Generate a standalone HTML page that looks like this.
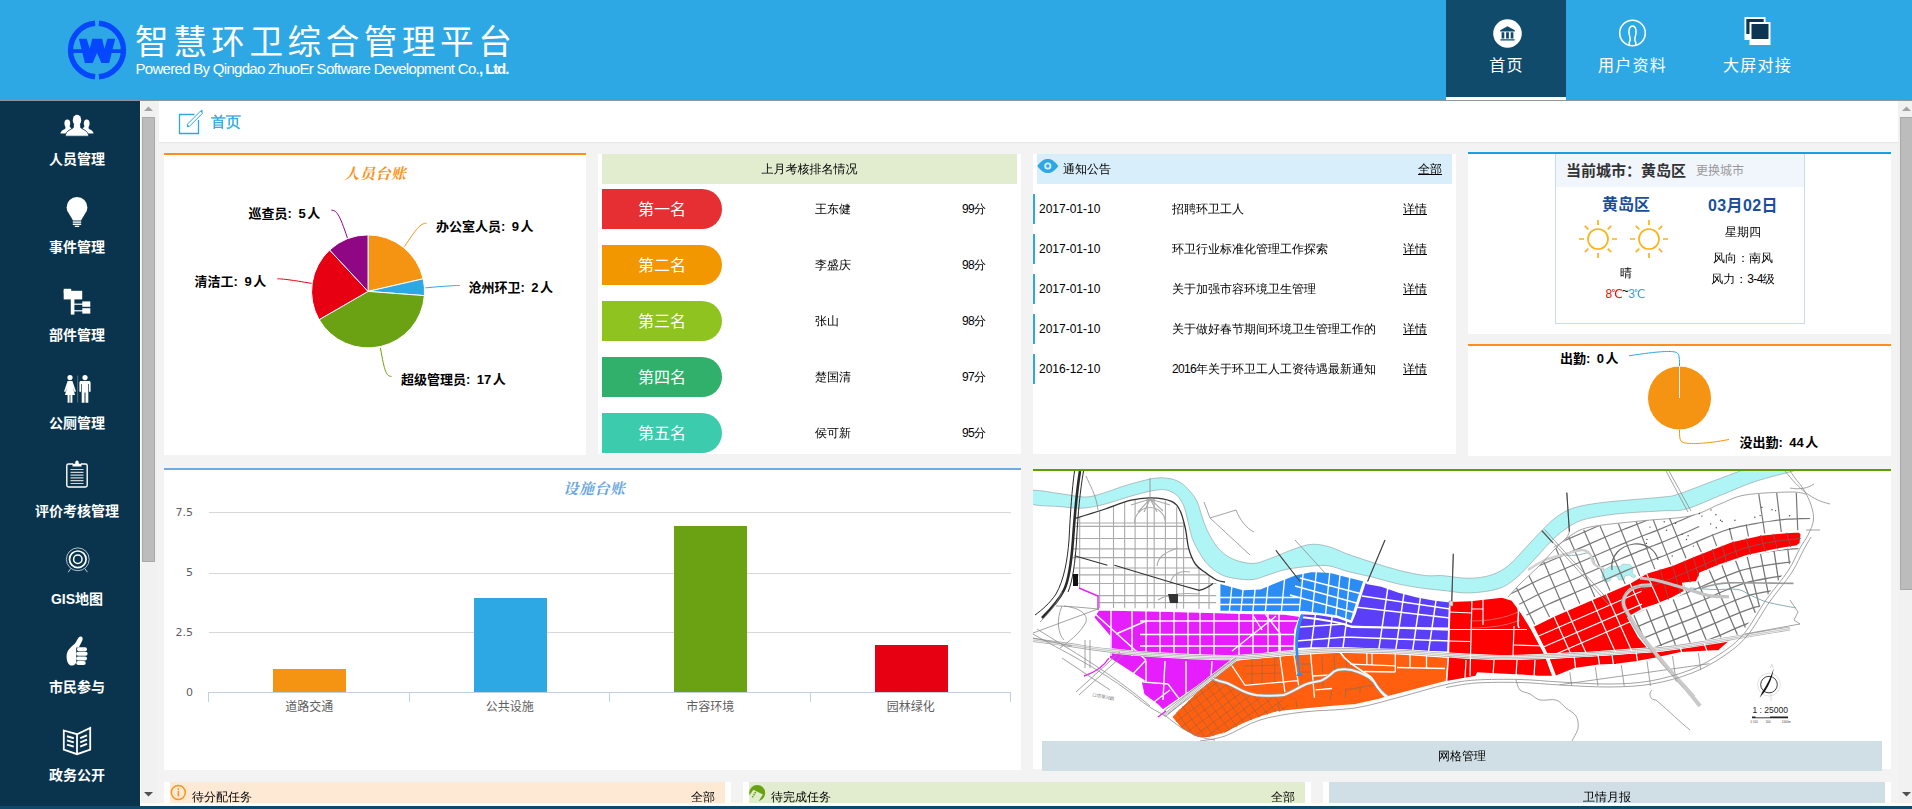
<!DOCTYPE html>
<html lang="zh-CN">
<head>
<meta charset="utf-8">
<title>智慧环卫综合管理平台</title>
<style>
*{box-sizing:border-box;margin:0;padding:0}
html,body{width:1912px;height:809px;overflow:hidden;background:#fff}
body{position:relative;font-family:"Liberation Sans","Noto Sans CJK SC",sans-serif;font-size:12px;color:#000}
.abs{position:absolute}
.song{font-family:"Liberation Sans","WenQuanYi Zen Hei","Noto Sans CJK SC",sans-serif}
.kai{font-family:"Liberation Serif","Noto Serif CJK SC",serif}
/* header */
#hd{position:absolute;left:0;top:0;width:1912px;height:100px;background:#2ea8e5}
#hdline{position:absolute;left:0;top:100px;width:1912px;height:1px;background:#8f9596}
#title{position:absolute;left:135px;top:20.5px;font-size:33.6px;line-height:44px;color:#fff;font-weight:400;letter-spacing:4.55px;white-space:nowrap}
#sub{position:absolute;left:135.5px;top:60px;font-size:15px;line-height:18px;color:#fff;white-space:nowrap;letter-spacing:-0.7px}
.tab{position:absolute;top:0;height:100px;width:120px;text-align:center;color:#fff;font-size:16px;letter-spacing:1.3px}
.tab span{position:absolute;left:0;width:100%;top:54px;line-height:24px;text-indent:1px}
.tab svg{position:absolute}
#tab1{left:1446px;background:#114b6c;border-bottom:3px solid #fff}
/* sidebar */
#sb{position:absolute;left:0;top:101px;width:140px;height:708px;background:#0a344e}
.mi{position:absolute;left:0;width:154px;text-align:center;color:#fff;font-weight:bold;font-size:14px;line-height:20px;white-space:nowrap}
.ic{position:absolute}
/* scrollbars */
.trk{position:absolute;background:#f1f1f1}
.thumb{position:absolute;background:#bcbcbc;border:1px solid #a9a9a9}
/* content */
#ct{position:absolute;left:157px;top:101px;width:1741px;height:702px;background:#f3f3f3}
#crumb{position:absolute;left:159px;top:101px;width:1739px;height:41px;background:#fff;box-shadow:0 1px 1px #e6e6e6}
.pn{position:absolute;background:#fff}
.hdr{position:absolute;height:29px;line-height:30px;font-size:12px}

.t12{position:absolute;font-size:12px;line-height:16px;white-space:nowrap}
.bdg{position:absolute;left:602px;width:120px;height:40px;border-radius:0 20px 20px 0;color:#fff;font-size:16px;line-height:42px;text-align:center;font-family:"Liberation Sans","Noto Sans CJK SC",sans-serif}
.nbar{position:absolute;left:1033px;width:2px;height:30px;background:#2ea7e5}
.u{text-decoration:underline}
.n{letter-spacing:-.65px}
#foot{position:absolute;left:0;top:806px;width:1912px;height:3px;background:#0f4868}
</style>
</head>
<body>
<div id="hd"></div>
<div id="hdline"></div>
<svg class="abs" style="left:64px;top:17px" width="66" height="66" viewBox="0 0 66 66">
<g fill="none" stroke="#0546ff">
<path d="M31.100 6.200A26.900 26.900 0 0 0 31.100 59.800" stroke-width="5.400"/>
<path d="M34.900 6.200A26.900 26.900 0 0 1 34.900 59.800" stroke-width="5.400"/>
<path d="M8 34.100H58" stroke-width="3.900"/>
</g>
<path fill="#0546ff" d="M14.900 21.800H22.700L25.700 31.700L28.300 21.800H38.200L40.400 31.700L43.400 21.800H51.200L45.200 46H37.400L33 36L28.700 46H20.900Z"/>
</svg>
<div id="title">智慧环卫综合管理平台</div>
<div id="sub">Powered By Qingdao ZhuoEr Software Development Co.<b style="letter-spacing:-1.1px">, Ltd.</b></div>
<div class="tab" id="tab1"><svg style="left:46.5px;top:18.5px" width="29" height="29" viewBox="0 0 29 29"><circle cx="14.5" cy="14.5" r="14.3" fill="#fff"/><path fill="#114b6c" d="M14.5 7.2L21.8 11.3V12.4H7.2V11.3ZM8.6 13.2H11.3V19.4H8.6ZM13.1 13.2H15.9V19.4H13.1ZM17.7 13.2H20.4V19.4H17.7ZM7.4 20.2H21.6V21.6H7.4Z"/></svg><span>首页</span></div>
<div class="tab" style="left:1572px"><svg style="left:46px;top:19px" width="29" height="29" viewBox="0 0 29 29"><circle cx="14.5" cy="14" r="12.8" fill="none" stroke="#fff" stroke-width="1.6"/><path fill="none" stroke="#fff" stroke-width="1.5" d="M11.2 26V23.5C13.6 20.5 11.3 17.5 11 14C10.6 9.8 12 7 14.5 7C17 7 18.4 9.8 18 14C17.7 17.5 15.4 20.5 17.8 23.5V26"/></svg><span>用户资料</span></div>
<div class="tab" style="left:1697px"><svg style="left:47px;top:16px" width="28" height="30" viewBox="0 0 28 30"><rect x="0.5" y="1" width="21" height="23" fill="#fff"/><rect x="2.3" y="3" width="17.4" height="15" fill="#0b3550"/><rect x="5.5" y="6" width="21" height="23" fill="#fff"/><rect x="7.5" y="8" width="17" height="15" fill="#0b3550"/></svg><span>大屏对接</span></div>
<div id="sb"></div>
<div class="mi" style="top:149px">人员管理</div>
<div class="mi" style="top:237px">事件管理</div>
<div class="mi" style="top:325px">部件管理</div>
<div class="mi" style="top:413px">公厕管理</div>
<div class="mi" style="top:501px">评价考核管理</div>
<div class="mi" style="top:589px">GIS地图</div>
<div class="mi" style="top:677px">市民参与</div>
<div class="mi" style="top:765px">政务公开</div>
<svg class="ic" style="left:60px;top:114px" width="34" height="23" viewBox="0 0 34 23" fill="#fff">
<ellipse cx="7.3" cy="9.3" rx="2.9" ry="3.9"/><ellipse cx="26.7" cy="9.3" rx="2.9" ry="3.9"/>
<path d="M5.4 12V14.6C3.8 16 1.2 16.2.4 19.6H6.5C7.5 17 9.5 16 11.5 14.8L9.3 12Z"/>
<path d="M28.6 12V14.6C30.2 16 32.8 16.2 33.6 19.6H27.5C26.500 17 24.5 16 22.5 14.800L24.700 12Z"/>
<ellipse cx="17" cy="6.300" rx="4.300" ry="5.800" stroke="#0a344e" stroke-width="1"/>
<path d="M13.400 10V13.500C11.500 15.800 6.200 15.800 5.200 22.200H28.800C27.800 15.800 22.500 15.800 20.600 13.500V10Z" stroke="#0a344e" stroke-width=".8"/>
<ellipse cx="17" cy="6.300" rx="4.100" ry="5.600"/>
</svg>
<svg class="ic" style="left:66px;top:196px" width="22" height="32" viewBox="0 0 22 32" fill="#fff">
<circle cx="11" cy="11.400" r="10.400"/><path d="M3.500 18.500L7 24.400H15L18.500 18.500Z"/>
<rect x="6.800" y="25.400" width="8.400" height="1.400"/><rect x="6.800" y="27.600" width="8.400" height="1.400"/><rect x="8.800" y="29.700" width="4.400" height="1.300"/>
</svg>
<svg class="ic" style="left:63px;top:288px" width="28" height="27" viewBox="0 0 28 27" fill="#fff">
<rect x=".7" y=".8" width="7.500" height="4"/><rect x=".7" y="2.800" width="18.500" height="8.600"/>
<rect x="7.800" y="11" width="3.600" height="15.600"/>
<rect x="11" y="15.600" width="9" height="1.200"/><rect x="11" y="22.200" width="9" height="1.200"/>
<rect x="19.300" y="13.400" width="8" height="5.400"/><rect x="19.300" y="20.200" width="8" height="5.400"/>
</svg>
<svg class="ic" style="left:63px;top:374px" width="28" height="30" viewBox="0 0 28 30" fill="#fff">
<circle cx="7" cy="3.600" r="2.600"/>
<path d="M4.600 7H9.400L13 17.500L11.600 18L9.800 13.200L12 21H9.400V28.700H7.400V21H6.600V28.700H4.600V21H2L4.200 13.200L2.400 18L1 17.500Z"/>
<rect x="14.300" y="1.500" width=".8" height="27" fill="#5f7b8c"/>
<circle cx="22" cy="3.600" r="2.600"/>
<path d="M18 7H26C27 7 27.600 7.600 27.600 8.600V17.800H26V10H25.300V28.700H22.500V18.500H21.500V28.700H18.700V10H18V17.800H16.400V8.600C16.400 7.600 17 7 18 7Z"/>
</svg>
<svg class="ic" style="left:65px;top:459px" width="24" height="30" viewBox="0 0 24 30" fill="none" stroke="#fff">
<path d="M8 5H3.500C2.400 5 1.800 5.600 1.800 6.700V26.300C1.800 27.400 2.400 28 3.500 28H20.500C21.600 28 22.200 27.400 22.200 26.300V6.700C22.200 5.600 21.600 5 20.500 5H16" stroke-width="1.400"/>
<path d="M7.500 7.500V4.800H10.200C10.200 2.800 10.800 1.600 12 1.600C13.200 1.600 13.800 2.800 13.800 4.800H16.500V7.500Z" fill="#fff" stroke="none"/>
<path d="M5.500 10.500H18.500M5.500 13.300H18.500M5.500 16.100H18.500M5.500 18.900H18.500M5.500 21.700H18.500M5.500 24.500H18.500" stroke-width="1.200" stroke="#c9d3da"/>
</svg>
<svg class="ic" style="left:65px;top:546px" width="26" height="27" viewBox="0 0 26 27" fill="none" stroke="#fff">
<circle cx="12.800" cy="13.300" r="11.400" stroke-width=".9" stroke="#c3ced5"/>
<circle cx="12.800" cy="13.300" r="8.300" stroke-width="1.700"/>
<circle cx="12.800" cy="13.300" r="4.200" stroke-width="1.500"/>
<path d="M5.800 22.500L3.200 26.200M19.800 22.500L22.400 26.200" stroke-width="1" stroke="#c3ced5"/>
</svg>
<svg class="ic" style="left:65px;top:635px" width="24" height="32" viewBox="0 0 24 32" fill="#fff">
<path d="M15.600 1.500C17.600 1.500 18.200 3.500 17.300 5.500L13.800 12.500H11.200V26.500C11.200 28.500 9.500 30.600 7 30.600C3.500 30.600 1.600 26.500 1.600 21.500C1.600 15.500 5.500 12.500 9.500 9C12 6.500 13 1.500 15.600 1.500Z"/>
<rect x="12" y="12.200" width="10" height="4" rx="2"/><rect x="11.200" y="16.800" width="11.400" height="4" rx="2"/><rect x="11.200" y="21.400" width="10.800" height="4" rx="2"/><rect x="11.200" y="26" width="9.500" height="4" rx="2"/>
</svg>
<svg class="ic" style="left:62px;top:726px" width="30" height="30" viewBox="0 0 30 30" fill="none" stroke="#fff">
<path d="M1.800 4.500L15 8.200L28.200 2V23.500L15 28.200L1.800 23.500Z" stroke-width="1.800" stroke-linejoin="miter"/>
<path d="M15 8.200V28.200" stroke-width="1.800"/>
<path d="M5 10.200L11.800 12.200M5 14.400L11.800 16.400M5 18.600L11.800 20.600M18.200 12.200L25 9.400M18.200 16.400L25 13.600M18.200 20.600L25 17.800" stroke-width="2"/>
</svg>

<div id="ct"></div>
<div id="crumb"></div>
<div class="trk" style="left:141px;top:101px;width:16px;height:702px"></div>
<div class="abs" style="left:140px;top:101px;width:1px;height:702px;background:#fff"></div>
<div class="thumb" style="left:142px;top:117px;width:13px;height:445px"></div>
<svg class="abs" style="left:144px;top:106px" width="9" height="6" viewBox="0 0 9 6"><path d="M0 5L4.500.5L9 5Z" fill="#a3a3a3"/></svg>
<svg class="abs" style="left:144px;top:791px" width="9" height="6" viewBox="0 0 9 6"><path d="M0 1L4.500 5.500L9 1Z" fill="#505050"/></svg>
<div class="trk" style="left:1898px;top:101px;width:14px;height:702px"></div>
<div class="thumb" style="left:1900px;top:117px;width:13px;height:473px"></div>
<svg class="abs" style="left:1902px;top:106px" width="9" height="6" viewBox="0 0 9 6"><path d="M0 5L4.500.5L9 5Z" fill="#a3a3a3"/></svg>
<svg class="abs" style="left:1902px;top:791px" width="9" height="6" viewBox="0 0 9 6"><path d="M0 1L4.500 5.500L9 1Z" fill="#505050"/></svg>
<div class="abs" style="left:140px;top:803px;width:1772px;height:3px;background:#fff"></div>


<svg class="abs" style="left:177px;top:107px" width="30" height="30" viewBox="0 0 30 30" fill="none" stroke="#2ea7e5">
<path d="M17.500 7.500H2.500V26.500H21.500V13" stroke-width="1.300"/>
<path d="M11.200 19.800L10.300 17.300L23.600 4L25.700 6.100L12.400 19.400Z" stroke-width="1" fill="#fff"/>
<path d="M10.300 17.300L9.800 20.200L12.400 19.400Z" fill="#2ea7e5" stroke="none"/>
<path d="M24 3.400L25.300 4.700" stroke-width="2"/>
</svg>
<div class="abs song" style="left:211px;top:111px;font-size:15px;line-height:22px;color:#2ea7e5;-webkit-text-stroke:.35px #2ea7e5">首页</div>

<!-- P1 pie -->
<div class="pn" style="left:164px;top:153px;width:422px;height:302px;border-top:2px solid #ff8e1c"></div>
<svg class="abs" style="left:164px;top:155px" width="422" height="300" viewBox="164 155 422 300">
<path d="M368.05 291.40L368.05 234.90A56.50 56.50 0 0 1 423.13 278.83Z" fill="#f59312" stroke="#fff" stroke-width="1" stroke-linejoin="round"/>
<path d="M368.05 291.40L423.13 278.83A56.50 56.50 0 0 1 424.39 295.62Z" fill="#2ea7e5" stroke="#fff" stroke-width="1" stroke-linejoin="round"/>
<path d="M368.05 291.40L424.39 295.62A56.50 56.50 0 0 1 319.12 319.65Z" fill="#6ba213" stroke="#fff" stroke-width="1" stroke-linejoin="round"/>
<path d="M368.05 291.40L319.12 319.65A56.50 56.50 0 0 1 329.62 249.98Z" fill="#e60012" stroke="#fff" stroke-width="1" stroke-linejoin="round"/>
<path d="M368.05 291.40L329.62 249.98A56.50 56.50 0 0 1 368.05 234.90Z" fill="#8f0783" stroke="#fff" stroke-width="1" stroke-linejoin="round"/>
<path d="M331.3 210.2C336.5 210.2 339.5 214 347.4 238" fill="none" stroke="#8f0783" stroke-width="1"/>
<path d="M426.6 223.2C420.5 223.2 416 229 404.5 246.6" fill="none" stroke="#f59312" stroke-width="1"/>
<path d="M459.8 285.5C454.8 285.5 445 286 425.3 287.9" fill="none" stroke="#2ea7e5" stroke-width="1"/>
<path d="M277.3 278.8C282.3 278.8 292 280 311.6 283.4" fill="none" stroke="#e60012" stroke-width="1"/>
<path d="M391.5 376.4C386.5 376.4 384.5 372 380.4 347.8" fill="none" stroke="#6ba213" stroke-width="1"/>
<text x="248.6" y="218.1" font-size="13" font-weight="bold" fill="#000" font-family="Liberation Sans,Noto Sans CJK SC,sans-serif">巡查员:<tspan dx="6.5">5</tspan><tspan dx="1.5">人</tspan></text>
<text x="436.0" y="231.0" font-size="13" font-weight="bold" fill="#000" font-family="Liberation Sans,Noto Sans CJK SC,sans-serif">办公室人员:<tspan dx="6.5">9</tspan><tspan dx="1.5">人</tspan></text>
<text x="468.5" y="292.1" font-size="13" font-weight="bold" fill="#000" font-family="Liberation Sans,Noto Sans CJK SC,sans-serif">沧州环卫:<tspan dx="6.5">2</tspan><tspan dx="1.5">人</tspan></text>
<text x="194.6" y="286.1" font-size="13" font-weight="bold" fill="#000" font-family="Liberation Sans,Noto Sans CJK SC,sans-serif">清洁工:<tspan dx="6.5">9</tspan><tspan dx="1.5">人</tspan></text>
<text x="401.0" y="383.7" font-size="13" font-weight="bold" fill="#000" font-family="Liberation Sans,Noto Sans CJK SC,sans-serif">超级管理员:<tspan dx="6.5">17</tspan><tspan dx="1.5">人</tspan></text>
<text x="375.5" y="179" text-anchor="middle" letter-spacing=".6" font-size="15" font-weight="bold" font-style="italic" fill="#f7931e" font-family="Liberation Serif,Noto Serif CJK SC,serif">人员台账</text>
</svg>
<!-- P2 rank -->
<div class="pn" style="left:598px;top:154px;width:423px;height:300px"></div>
<div class="hdr song" style="left:602px;top:154px;width:415px;height:30px;background:#e2edd0;text-align:center;line-height:31px">上月考核排名情况</div>
<div class="bdg" style="top:189px;background:#e62f33">第一名</div><div class="t12 song" style="left:815px;top:201px">王东健</div><div class="t12 song n" style="left:962px;top:201px">99分</div>
<div class="bdg" style="top:245px;background:#f39700">第二名</div><div class="t12 song" style="left:815px;top:257px">李盛庆</div><div class="t12 song n" style="left:962px;top:257px">98分</div>
<div class="bdg" style="top:301px;background:#8fc31f">第三名</div><div class="t12 song" style="left:815px;top:313px">张山</div><div class="t12 song n" style="left:962px;top:313px">98分</div>
<div class="bdg" style="top:357px;background:#31b06b">第四名</div><div class="t12 song" style="left:815px;top:369px">楚国清</div><div class="t12 song n" style="left:962px;top:369px">97分</div>
<div class="bdg" style="top:413px;background:#3dcbad">第五名</div><div class="t12 song" style="left:815px;top:425px">侯可新</div><div class="t12 song n" style="left:962px;top:425px">95分</div>

<!-- P3 notice -->
<div class="pn" style="left:1033px;top:154px;width:423px;height:300px"></div>
<div class="hdr" style="left:1037px;top:154px;width:415px;height:30px;background:#d8eefa"></div>
<svg class="abs" style="left:1037px;top:158px" width="22" height="16" viewBox="0 0 22 16"><path d="M.3 8C4 2.600 7.500 1 10.800 1C14.100 1 17.600 2.600 21.300 8C17.600 13.400 14.100 15 10.800 15C7.500 15 4 13.400.3 8Z" fill="#2ea7e5"/><circle cx="10.800" cy="8" r="3.600" fill="#d8eefa"/><circle cx="10.800" cy="8" r="1.700" fill="#2ea7e5"/></svg>
<div class="t12 song" style="left:1063px;top:161px">通知公告</div>
<div class="t12 song u" style="left:1418px;top:161px">全部</div>
<div class="nbar" style="top:194px"></div><div class="t12 song" style="left:1039px;top:201px">2017-01-10</div><div class="t12 song" style="left:1172px;top:201px">招聘环卫工人</div><div class="t12 song u" style="left:1403px;top:201px">详情</div>
<div class="nbar" style="top:234px"></div><div class="t12 song" style="left:1039px;top:241px">2017-01-10</div><div class="t12 song" style="left:1172px;top:241px">环卫行业标准化管理工作探索</div><div class="t12 song u" style="left:1403px;top:241px">详情</div>
<div class="nbar" style="top:274px"></div><div class="t12 song" style="left:1039px;top:281px">2017-01-10</div><div class="t12 song" style="left:1172px;top:281px">关于加强市容环境卫生管理</div><div class="t12 song u" style="left:1403px;top:281px">详情</div>
<div class="nbar" style="top:314px"></div><div class="t12 song" style="left:1039px;top:321px">2017-01-10</div><div class="t12 song" style="left:1172px;top:321px">关于做好春节期间环境卫生管理工作的</div><div class="t12 song u" style="left:1403px;top:321px">详情</div>
<div class="nbar" style="top:354px"></div><div class="t12 song" style="left:1039px;top:361px">2016-12-10</div><div class="t12 song" style="left:1172px;top:361px"><span class="n">2016</span>年关于环卫工人工资待遇最新通知</div><div class="t12 song u" style="left:1403px;top:361px">详情</div>

<!-- P4 weather -->
<div class="pn" style="left:1468px;top:152px;width:423px;height:182px;border-top:2px solid #18a0e0"></div>
<div class="abs" style="left:1555px;top:154px;width:250px;height:170px;border:1px solid #c7dbee;border-top:0;background:#fff"></div>
<div class="abs" style="left:1556px;top:154px;width:248px;height:33px;background:#f1f6fc"></div>
<div class="abs" style="left:1566px;top:161px;font-size:15px;line-height:20px;font-weight:bold;color:#333;white-space:nowrap">当前城市：黄岛区</div>
<div class="t12" style="left:1696px;top:163px;color:#999">更换城市</div>
<div class="abs" style="left:1586px;top:194px;width:80px;text-align:center;font-size:16px;line-height:22px;font-weight:bold;color:#1b4f9d">黄岛区</div>
<div class="abs" style="left:1693px;top:195px;width:100px;text-align:center;font-size:16px;line-height:22px;font-weight:bold;color:#1b4f9d;white-space:nowrap;letter-spacing:.4px">03月02日</div>
<svg class="abs" style="left:1575px;top:217.700px" width="100" height="42" viewBox="-23 -21 100 42"><g fill="none" stroke="#fcb316" stroke-width="1.700"><circle cx="0" cy="0" r="10"/><path d="M0 -14V-19M0 14V19M-14 0H-19M14 0H19M-9.700 -9.700L-13.200 -13.200M9.700 -9.700L13.200 -13.200M-9.700 9.700L-13.200 13.200M9.700 9.700L13.200 13.200"/></g><g transform="translate(51 0)"><g fill="none" stroke="#fcb316" stroke-width="1.700"><circle cx="0" cy="0" r="10"/><path d="M0 -14V-19M0 14V19M-14 0H-19M14 0H19M-9.700 -9.700L-13.200 -13.200M9.700 -9.700L13.200 -13.200M-9.700 9.700L-13.200 13.200M9.700 9.700L13.200 13.200"/></g></g></svg>
<div class="t12 song" style="left:1693px;top:224px;width:100px;text-align:center">星期四</div>
<div class="t12 song" style="left:1693px;top:250px;width:100px;text-align:center">风向：南风</div>
<div class="t12 song" style="left:1693px;top:271px;width:100px;text-align:center">风力：<span class="n">3-4</span>级</div>
<div class="t12 song" style="left:1586px;top:265px;width:80px;text-align:center">晴</div>
<div class="t12 song n" style="left:1585px;top:286px;width:80px;text-align:center"><span style="color:#f00">8℃</span><span style="position:relative;top:-3px">~</span><span style="color:#4899c8">3℃</span></div>

<div class="pn" style="left:1468px;top:344px;width:423px;height:112px;border-top:2px solid #ff8e1c"></div>
<svg class="abs" style="left:1468px;top:346px" width="423" height="110" viewBox="1468 346 423 110">
<circle cx="1679.500" cy="398" r="32" fill="#f59312" stroke="#fff" stroke-width="1"/>
<path d="M1679.500 398V366.400" stroke="#fff" stroke-width="1"/>
<path d="M1629 355.800C1660 351 1670 351 1675 352C1679 353 1679.500 355 1679.500 366" fill="none" stroke="#2ea7e5" stroke-width="1"/>
<path d="M1729 439.500C1705 444 1692 444 1685 443C1680 442 1679.500 440 1679.500 430" fill="none" stroke="#f59312" stroke-width="1"/>
<text x="1560" y="363.200" font-size="13" font-weight="bold" font-family="Liberation Sans,Noto Sans CJK SC,sans-serif">出勤:<tspan dx="6.500">0</tspan><tspan dx="1.500">人</tspan></text>
<text x="1739.500" y="447" font-size="13" font-weight="bold" font-family="Liberation Sans,Noto Sans CJK SC,sans-serif">没出勤:<tspan dx="6.500">44</tspan><tspan dx="1.500">人</tspan></text>
</svg>
<!-- row2 -->
<div class="pn" style="left:164px;top:468px;width:857px;height:302px;border-top:2px solid #6aabe8"></div>
<svg class="abs" style="left:164px;top:470px" width="857" height="300" viewBox="164 470 857 300" font-family="Liberation Sans,Noto Sans CJK SC,sans-serif">
<path d="M209 512.5H1011" stroke="#d8d8d8" stroke-width="1"/>
<path d="M209 573.5H1011" stroke="#d8d8d8" stroke-width="1"/>
<path d="M209 632.5H1011" stroke="#d8d8d8" stroke-width="1"/>
<path d="M209 692.500H1011" stroke="#c0d0e0" stroke-width="1"/>
<path d="M208.5 692V702" stroke="#c0d0e0" stroke-width="1"/>
<path d="M409.5 692V702" stroke="#c0d0e0" stroke-width="1"/>
<path d="M609.5 692V702" stroke="#c0d0e0" stroke-width="1"/>
<path d="M810.5 692V702" stroke="#c0d0e0" stroke-width="1"/>
<path d="M1010.5 692V702" stroke="#c0d0e0" stroke-width="1"/>
<rect x="273.0" y="669.0" width="73" height="23.0" fill="#f59312"/>
<text x="309.2" y="711.300" text-anchor="middle" font-size="12" fill="#606060">道路交通</text>
<rect x="474.0" y="598.0" width="73" height="94.0" fill="#2ea7e5"/>
<text x="509.8" y="711.300" text-anchor="middle" font-size="12" fill="#606060">公共设施</text>
<rect x="674.0" y="526.0" width="73" height="166.0" fill="#6ba213"/>
<text x="710.2" y="711.300" text-anchor="middle" font-size="12" fill="#606060">市容环境</text>
<rect x="875.0" y="645.0" width="73" height="47.0" fill="#e60012"/>
<text x="910.8" y="711.300" text-anchor="middle" font-size="12" fill="#606060">园林绿化</text>
<text x="193" y="515.5" text-anchor="end" font-size="11" fill="#606060" font-family="DejaVu Sans,Liberation Sans,sans-serif">7.5</text>
<text x="193" y="575.5" text-anchor="end" font-size="11" fill="#606060" font-family="DejaVu Sans,Liberation Sans,sans-serif">5</text>
<text x="193" y="635.5" text-anchor="end" font-size="11" fill="#606060" font-family="DejaVu Sans,Liberation Sans,sans-serif">2.5</text>
<text x="193" y="695.5" text-anchor="end" font-size="11" fill="#606060" font-family="DejaVu Sans,Liberation Sans,sans-serif">0</text>
<text x="594.500" y="493.700" text-anchor="middle" letter-spacing=".6" font-size="15" font-weight="bold" font-style="italic" fill="#69a7de" font-family="Liberation Serif,Noto Serif CJK SC,serif">设施台账</text>
</svg>
<div class="pn" style="left:1033px;top:469px;width:858px;height:300px;border-top:2px solid #5f9e00"></div>
<!--MAPSTART--><svg class="abs" style="left:1033px;top:471px" width="858" height="270" viewBox="1033 471 858 270">
<defs>
<clipPath id="cB"><polygon points="1219.5,583.0 1243.0,589.3 1260.3,588.5 1277.6,581.5 1294.9,574.6 1312.2,571.2 1329.6,572.0 1346.9,576.4 1364.2,580.7 1353.8,612.7 1351.2,621.4 1336.5,616.2 1317.4,613.6 1303.6,611.8 1243.0,611.8 1219.5,611.5"/></clipPath>
<clipPath id="cP"><polygon points="1367.6,583.3 1381.5,585.9 1398.8,591.9 1416.1,596.3 1433.4,599.7 1449.9,601.5 1448.1,652.5 1398.8,650.8 1346.9,648.2 1312.2,648.2 1296.7,649.0 1294.9,636.9 1298.4,621.4 1301.9,614.4 1286.3,612.7 1319.2,614.4 1336.5,617.0 1351.2,622.2 1354.8,613.6 1365.2,581.5"/></clipPath>
<clipPath id="cM"><polygon points="1098.8,609.7 1093.6,617.4 1110.0,636.5 1109.2,658.1 1143.8,680.6 1141.2,682.4 1143.8,694.5 1157.6,704.9 1162.8,710.0 1185.3,694.5 1211.3,677.2 1232.1,661.6 1240.0,656.0 1294.1,651.0 1294.9,630.0 1300.1,616.2 1284.5,614.0 1243.0,613.3 1219.0,612.5 1160.0,611.0"/></clipPath>
<clipPath id="cO"><polygon points="1233.8,660.7 1243.0,659.0 1294.9,654.6 1339.9,652.0 1398.8,653.8 1449.0,657.2 1446.4,681.5 1390.1,696.2 1378.0,699.6 1355.5,704.8 1333.0,706.5 1303.6,709.1 1277.6,711.7 1260.3,716.9 1243.0,723.9 1225.0,733.0 1210.0,737.5 1197.4,737.7 1181.9,729.1 1171.5,717.0 1195.7,692.7 1211.3,679.8"/></clipPath>
<clipPath id="cRw"><polygon points="1449.9,601.3 1470.7,600.4 1501.9,597.0 1512.0,600.0 1515.7,604.8 1521.8,613.4 1527.8,622.9 1531.0,628.0 1544.9,654.0 1551.8,673.0 1553.5,676.6 1536.5,676.2 1494.9,674.0 1477.6,673.0 1475.9,676.6 1446.5,681.8 1448.2,659.0"/></clipPath>
<clipPath id="cRm"><polygon points="1533.0,626.4 1553.8,616.0 1591.9,599.6 1629.9,583.1 1646.5,573.0 1672.4,565.3 1693.2,556.6 1712.2,548.9 1733.0,541.1 1760.6,535.0 1786.6,532.4 1799.0,531.6 1801.3,534.0 1800.3,543.4 1797.0,546.0 1774.5,549.7 1746.8,555.8 1719.1,565.3 1700.1,573.1 1696.6,581.7 1682.8,583.5 1684.5,591.5 1672.3,597.9 1656.7,604.5 1643.0,609.0 1628.0,617.5 1638.6,636.8 1650.7,651.0 1546.9,654.0"/></clipPath>
<clipPath id="cRl"><polygon points="1548.6,658.4 1663.0,650.6 1733.3,638.2 1718.6,650.8 1680.8,652.9 1655.9,658.4 1636.9,661.9 1616.1,664.5 1598.8,665.3 1574.6,668.8 1555.5,676.6"/></clipPath>
<clipPath id="cNW"><polygon points="1076.0,519.0 1102.0,510.0 1130.0,500.5 1150.7,498.0 1171.5,501.5 1180.0,511.0 1185.3,528.0 1188.8,549.0 1195.7,564.5 1206.0,573.0 1216.5,580.0 1216.0,609.0 1098.0,608.0 1098.0,596.0 1079.0,588.0 1072.0,560.0"/></clipPath>
<clipPath id="cNE"><polygon points="1508.0,597.0 1520.0,584.0 1540.0,565.0 1556.0,548.0 1570.0,536.0 1590.0,527.0 1640.0,521.0 1690.0,516.0 1720.0,504.0 1745.0,495.0 1790.0,492.0 1806.0,494.0 1812.0,530.0 1800.0,530.0 1786.0,531.4 1760.0,534.0 1733.0,540.0 1712.0,548.0 1693.0,555.6 1672.0,564.3 1646.0,572.0 1630.0,582.0 1592.0,598.6 1554.0,615.0 1533.0,625.4 1520.0,605.0"/></clipPath>
<clipPath id="cEA"><polygon points="1643.0,610.5 1657.0,606.0 1673.0,599.5 1686.0,592.5 1684.0,584.5 1697.0,582.7 1700.5,574.0 1719.0,566.3 1747.0,556.8 1775.0,550.7 1798.0,547.0 1800.0,546.0 1786.0,570.0 1764.0,600.0 1741.0,634.0 1733.0,637.5 1663.0,649.6 1652.0,650.0 1640.0,636.8 1628.0,617.0"/></clipPath>
<clipPath id="cSO"><polygon points="1557.0,678.0 1575.0,670.0 1599.0,666.5 1616.0,665.7 1637.0,663.0 1656.0,659.6 1681.0,654.0 1719.0,652.0 1728.0,645.0 1705.0,668.0 1680.0,681.0 1650.0,686.0 1560.0,686.0"/></clipPath>
</defs>
<rect x="1033" y="471" width="858" height="270" fill="#fff"/>
<path d="M1031.0 490.7C1035.7 489.0 1050.0 492.4 1059.0 493.5C1068.0 494.6 1077.7 497.0 1084.9 497.0C1092.1 497.0 1096.4 495.1 1102.2 493.5C1108.0 491.9 1113.8 489.3 1119.6 487.4C1125.4 485.5 1131.1 483.8 1136.9 482.3C1142.7 480.8 1149.0 479.0 1154.2 478.3C1159.4 477.6 1163.7 477.6 1168.0 478.3C1172.3 479.0 1176.3 480.1 1180.1 482.3C1183.8 484.6 1187.6 488.5 1190.5 491.8C1193.4 495.1 1195.5 498.2 1197.4 502.2C1199.3 506.2 1200.2 511.4 1201.8 516.0C1203.4 520.6 1204.8 525.3 1207.0 529.9C1209.2 534.5 1212.1 539.8 1214.8 543.7C1217.5 547.6 1220.0 550.5 1223.4 553.2C1226.9 555.9 1230.6 558.4 1235.5 560.1C1240.4 561.8 1247.4 563.7 1253.0 563.5C1258.6 563.3 1262.0 561.5 1269.0 559.0C1276.0 556.5 1287.7 551.2 1294.9 548.7C1302.1 546.2 1306.4 544.6 1312.2 544.3C1318.0 544.0 1323.8 545.3 1329.6 546.9C1335.4 548.5 1339.7 551.2 1346.9 553.8C1354.1 556.4 1364.2 559.8 1372.8 562.5C1381.4 565.2 1390.1 568.1 1398.8 570.3C1407.5 572.5 1417.4 574.6 1424.8 575.5C1432.2 576.4 1435.6 575.2 1443.0 575.7C1450.4 576.2 1460.9 578.4 1469.0 578.3C1477.1 578.2 1484.9 577.1 1491.5 574.9C1498.1 572.7 1503.0 569.9 1508.8 565.3C1514.6 560.7 1520.6 553.0 1526.1 547.2C1531.6 541.4 1536.8 535.6 1541.7 530.7C1546.6 525.8 1550.3 521.5 1555.5 517.7C1560.7 514.0 1565.6 510.6 1572.8 508.2C1580.0 505.8 1588.7 504.4 1598.8 503.0C1608.9 501.6 1622.7 500.6 1633.4 499.6C1644.1 498.6 1655.6 497.9 1663.0 497.0C1670.4 496.1 1669.4 497.0 1677.6 494.4C1685.8 491.8 1701.8 485.3 1712.2 481.4C1722.6 477.5 1734.4 473.2 1739.9 471.0C1745.4 468.8 1735.0 468.5 1745.0 468.0C1755.0 467.5 1791.9 467.5 1800.0 468.0C1808.1 468.5 1800.9 468.8 1793.5 471.0C1786.1 473.2 1767.6 477.4 1755.5 481.4C1743.4 485.4 1732.4 490.6 1720.9 495.2C1709.4 499.8 1696.0 506.4 1686.3 509.0C1676.6 511.6 1671.8 510.2 1663.0 510.8C1654.2 511.4 1642.7 511.8 1633.4 512.5C1624.1 513.2 1616.1 513.8 1607.4 515.1C1598.8 516.4 1588.7 517.8 1581.5 520.3C1574.3 522.8 1569.4 526.3 1564.2 529.9C1559.0 533.5 1555.5 536.8 1550.3 542.0C1545.1 547.2 1538.8 555.0 1533.0 561.0C1527.2 567.0 1521.5 573.7 1515.7 578.3C1509.9 582.9 1506.2 586.2 1498.4 588.7C1490.6 591.2 1478.2 592.7 1469.0 593.0C1459.8 593.3 1450.4 591.1 1443.0 590.4C1435.6 589.6 1432.2 589.5 1424.8 588.5C1417.4 587.5 1407.5 586.0 1398.8 584.1C1390.1 582.2 1381.4 579.4 1372.8 577.2C1364.2 575.1 1354.1 573.1 1346.9 571.2C1339.7 569.3 1335.4 566.9 1329.6 566.0C1323.8 565.1 1319.4 565.4 1312.2 566.0C1305.0 566.6 1293.5 568.0 1286.3 569.4C1279.1 570.8 1274.5 572.9 1269.0 574.6C1263.5 576.3 1258.9 578.9 1253.0 579.5C1247.1 580.1 1239.3 579.2 1233.8 578.3C1228.3 577.4 1224.3 576.3 1220.0 574.0C1215.7 571.7 1211.3 568.1 1207.8 564.5C1204.3 560.9 1201.8 556.7 1199.2 552.4C1196.6 548.1 1194.2 543.7 1192.3 538.5C1190.4 533.3 1189.4 526.7 1187.9 521.2C1186.5 515.7 1185.5 509.9 1183.6 505.6C1181.7 501.3 1179.6 497.8 1176.7 495.2C1173.8 492.6 1170.0 490.8 1166.3 490.0C1162.5 489.2 1159.1 489.7 1154.2 490.4C1149.3 491.1 1142.7 492.9 1136.9 494.4C1131.1 495.9 1125.4 497.9 1119.6 499.6C1113.8 501.3 1108.5 503.4 1102.2 504.8C1095.9 506.2 1088.7 507.9 1081.5 508.2C1074.3 508.5 1067.4 507.2 1059.0 506.5C1050.6 505.8 1035.7 506.3 1031.0 503.7C1026.3 501.1 1026.3 492.4 1031.0 490.7Z" fill="#b0f5f5" stroke="#8a9a9a" stroke-width=".6"/>
<polygon points="1602.0,578.0 1604.0,570.0 1611.0,566.0 1620.0,566.5 1623.0,564.0 1630.0,564.5 1633.0,568.0 1632.0,573.0 1636.0,576.0 1634.0,578.0 1629.0,575.0 1625.0,576.0 1624.0,580.0 1619.0,580.0 1617.0,576.0 1612.0,577.0 1610.0,581.0 1605.0,582.0" fill="#b0f0f0" stroke="#8aa" stroke-width=".4"/>
<path clip-path="url(#cNW)" d="M1079.7 495.0L1079.7 612.0M1099.6 495.0L1099.6 612.0M1113.5 495.0L1113.5 612.0M1124.7 495.0L1124.7 612.0M1135.1 495.0L1135.1 612.0M1147.3 495.0L1147.3 612.0M1154.2 495.0L1154.2 612.0M1165.4 495.0L1165.4 612.0M1176.7 495.0L1176.7 612.0M1183.6 495.0L1183.6 612.0M1199.0 495.0L1199.0 612.0M1209.0 495.0L1209.0 612.0M1070.0 523.0L1220.0 523.0M1070.0 526.4L1220.0 526.4M1070.0 538.5L1220.0 538.5M1070.0 548.9L1220.0 548.9M1070.0 557.6L1220.0 557.6M1070.0 568.0L1220.0 568.0M1070.0 574.9L1220.0 574.9M1070.0 583.5L1220.0 583.5M1070.0 595.6L1220.0 595.6M1070.0 602.6L1220.0 602.6M1070.0 609.5L1220.0 609.5" stroke="#aaa" stroke-width="1.100" fill="none" />
<g clip-path="url(#cNW)" fill="none" stroke="#aaa" stroke-width="1.100"><path d="M1134.500 523A15.500 15.500 0 0 1 1165.500 523M1150.200 499L1131 505M1150.200 499L1138 512M1150.200 499L1144 512M1150.200 499L1157 512M1150.200 499L1163 511M1150.200 499L1170 505"/><path d="M1178 548C1166 552 1158 556 1157 566M1190 572C1180 570 1172 574 1170 584M1158 600C1164 596 1176 592 1200 594"/></g>
<path clip-path="url(#cNE)" d="M1494.4 630.2C1499.9 627.7 1518.3 619.0 1527.3 614.7C1536.3 610.3 1538.5 608.7 1548.4 604.2C1558.3 599.7 1574.0 593.2 1586.7 587.7C1599.5 582.2 1615.8 575.0 1624.8 571.1C1633.8 567.3 1635.5 566.7 1640.8 564.6C1646.0 562.5 1651.9 560.2 1656.3 558.5C1660.8 556.8 1662.5 556.2 1667.4 554.2C1672.4 552.1 1680.0 549.0 1686.1 546.4C1692.2 543.8 1697.3 541.3 1704.1 538.6C1711.0 535.8 1720.9 531.9 1727.1 529.8C1733.4 527.8 1736.9 527.3 1741.8 526.2C1746.8 525.1 1751.8 524.2 1756.8 523.3C1761.8 522.4 1766.7 521.7 1771.8 521.0C1776.8 520.3 1782.2 519.6 1787.0 519.2C1791.7 518.9 1793.4 518.9 1800.5 518.7C1807.7 518.5 1824.9 518.4 1829.8 518.3M1488.9 618.5C1494.4 615.9 1512.7 607.4 1521.7 603.0C1530.7 598.6 1533.0 596.9 1543.0 592.3C1553.0 587.8 1568.8 581.3 1581.6 575.7C1594.4 570.2 1610.6 563.0 1619.7 559.2C1628.8 555.3 1630.6 554.7 1635.9 552.6C1641.2 550.4 1647.2 548.1 1651.6 546.4C1656.0 544.7 1657.6 544.1 1662.5 542.1C1667.4 540.1 1674.9 537.1 1681.0 534.5C1687.1 531.9 1696.2 527.8 1699.2 526.5M1483.3 606.7C1488.8 604.2 1507.0 595.7 1516.0 591.3C1525.1 586.9 1527.6 585.1 1537.6 580.5C1547.7 575.9 1563.6 569.3 1576.4 563.8C1589.2 558.3 1605.5 551.1 1614.6 547.2C1623.7 543.3 1625.7 542.7 1631.1 540.5C1636.5 538.3 1642.4 536.0 1646.8 534.3C1651.3 532.6 1652.8 532.0 1657.7 530.1C1662.5 528.1 1669.8 525.1 1675.9 522.5C1682.1 519.9 1691.3 515.8 1694.4 514.5M1477.8 595.0C1483.2 592.4 1501.3 584.0 1510.4 579.6C1519.5 575.2 1522.1 573.3 1532.3 568.7C1542.4 564.1 1558.4 557.4 1571.3 551.9C1584.1 546.3 1600.3 539.2 1609.5 535.3C1618.7 531.4 1620.8 530.6 1626.3 528.4C1631.7 526.3 1637.7 523.9 1642.1 522.2C1646.5 520.5 1648.0 520.0 1652.8 518.0C1657.6 516.1 1664.7 513.1 1670.9 510.5C1677.0 507.9 1686.4 503.8 1689.5 502.4M1472.2 583.2C1477.6 580.7 1495.6 572.3 1504.7 567.9C1513.8 563.5 1516.6 561.5 1526.9 556.8C1537.1 552.2 1553.2 545.5 1566.1 539.9C1579.0 534.3 1595.2 527.2 1604.4 523.3C1613.6 519.4 1615.9 518.6 1621.4 516.4C1626.9 514.2 1632.9 511.8 1637.3 510.1C1641.7 508.4 1643.1 507.9 1647.9 506.0C1652.6 504.0 1659.7 501.2 1665.8 498.6C1671.9 496.0 1681.5 491.7 1684.6 490.4M1466.7 571.5C1472.1 568.9 1489.9 560.6 1499.1 556.2C1508.2 551.8 1511.2 549.7 1521.5 545.0C1531.8 540.3 1548.0 533.6 1560.9 528.0C1573.9 522.4 1590.0 515.3 1599.3 511.4C1608.6 507.4 1611.0 506.5 1616.6 504.3C1622.1 502.1 1628.2 499.7 1632.6 498.0C1637.0 496.3 1638.3 495.8 1643.0 493.9C1647.7 492.0 1654.6 489.2 1660.7 486.6C1666.8 484.0 1676.5 479.7 1679.7 478.3" stroke="#777" stroke-width="1.200" fill="none"/>
<path clip-path="url(#cNE)" d="M1506.3 641.2L1464.8 553.5M1521.2 634.2L1479.7 546.5M1536.1 627.1L1492.7 540.3M1550.9 619.7L1507.5 532.9M1565.8 613.0L1527.5 523.9M1581.0 606.5L1542.6 517.4M1596.1 599.9L1557.5 511.0M1611.3 593.4L1572.7 504.4M1626.4 586.8L1587.8 497.8M1641.6 580.5L1605.0 490.7M1656.9 574.4L1621.4 484.1M1672.3 568.4L1636.8 478.1M1687.6 562.1L1650.6 472.4M1702.8 555.5L1696.3 540.9M1717.9 549.4L1712.3 534.4M1733.2 543.8L1729.4 528.2M1749.2 540.0L1746.1 524.3M1765.3 537.2L1750.8 441.3M1781.6 535.0L1770.3 438.6M1797.9 533.8L1794.1 436.9M1814.4 533.5L1813.0 436.5" stroke="#777" stroke-width="1.200" fill="none"/>
<path clip-path="url(#cEA)" d="M1507.3 657.4C1512.8 654.8 1531.5 646.0 1540.4 641.7C1549.3 637.4 1551.1 635.9 1560.8 631.5C1570.5 627.1 1586.0 620.7 1598.6 615.2C1611.3 609.7 1627.7 602.5 1636.6 598.7C1645.4 595.0 1646.8 594.5 1651.9 592.5C1657.0 590.4 1662.9 588.2 1667.3 586.4C1671.8 584.7 1673.6 584.0 1678.7 582.0C1683.8 579.9 1691.7 576.6 1697.9 574.0C1704.0 571.4 1708.9 569.0 1715.4 566.4C1721.8 563.7 1731.0 560.2 1736.5 558.4C1742.0 556.5 1744.0 556.4 1748.2 555.5C1752.5 554.6 1757.3 553.6 1761.9 552.9C1766.5 552.1 1771.2 551.4 1775.8 550.7C1780.3 550.1 1785.1 549.5 1789.4 549.1C1793.6 548.8 1794.4 548.8 1801.2 548.7C1808.0 548.6 1825.4 548.4 1830.2 548.3M1512.8 669.1C1518.4 666.5 1537.2 657.7 1546.1 653.4C1555.0 649.1 1556.6 647.7 1566.2 643.3C1575.8 638.9 1591.2 632.6 1603.8 627.1C1616.4 621.7 1632.8 614.5 1641.7 610.7C1650.5 606.9 1651.7 606.6 1656.8 604.5C1661.8 602.5 1667.6 600.3 1672.1 598.5C1676.5 596.8 1678.4 596.1 1683.6 594.0C1688.7 591.9 1696.8 588.6 1702.9 586.0C1709.1 583.4 1714.0 581.0 1720.3 578.4C1726.5 575.9 1735.4 572.4 1740.6 570.7C1745.7 569.0 1747.1 569.0 1751.0 568.2C1755.0 567.4 1759.7 566.4 1764.1 565.7C1768.5 564.9 1773.1 564.2 1777.5 563.6C1781.9 563.0 1786.4 562.4 1790.4 562.1C1794.4 561.8 1794.8 561.8 1801.4 561.7C1808.1 561.6 1825.6 561.4 1830.4 561.3M1518.4 680.9C1523.9 678.2 1542.8 669.4 1551.7 665.1C1560.6 660.8 1562.1 659.5 1571.6 655.1C1581.2 650.8 1596.4 644.5 1609.0 639.1C1621.5 633.7 1638.0 626.4 1646.8 622.7C1655.5 618.9 1656.6 618.6 1661.6 616.6C1666.6 614.6 1672.4 612.4 1676.8 610.6C1681.3 608.9 1683.3 608.2 1688.5 606.1C1693.6 603.9 1701.9 600.6 1708.0 598.0C1714.1 595.4 1719.0 592.9 1725.1 590.5C1731.2 588.0 1739.8 584.6 1744.6 583.1C1749.4 581.5 1750.2 581.7 1753.8 580.9C1757.4 580.1 1762.1 579.2 1766.3 578.5C1770.6 577.7 1775.0 577.1 1779.2 576.5C1783.4 575.9 1787.7 575.4 1791.5 575.1C1795.2 574.8 1795.2 574.8 1801.7 574.7C1808.2 574.6 1825.8 574.4 1830.6 574.3M1523.9 692.6C1529.5 690.0 1548.5 681.1 1557.4 676.8C1566.2 672.5 1567.5 671.3 1577.0 667.0C1586.5 662.7 1601.6 656.4 1614.1 651.0C1626.6 645.6 1643.1 638.3 1651.9 634.6C1660.6 630.9 1661.5 630.7 1666.4 628.7C1671.4 626.7 1677.1 624.5 1681.6 622.7C1686.1 621.0 1688.1 620.2 1693.3 618.1C1698.6 616.0 1707.0 612.5 1713.1 609.9C1719.2 607.3 1724.1 604.9 1730.0 602.5C1736.0 600.1 1744.3 596.9 1748.7 595.4C1753.1 593.9 1753.3 594.3 1756.6 593.6C1759.9 592.9 1764.5 592.0 1768.5 591.3C1772.6 590.6 1777.0 589.9 1781.0 589.4C1785.0 588.9 1789.0 588.3 1792.5 588.0C1796.0 587.7 1795.6 587.8 1802.0 587.7C1808.4 587.6 1826.0 587.4 1830.8 587.3M1529.5 704.4C1535.1 701.7 1554.2 692.8 1563.0 688.5C1571.8 684.3 1573.0 683.1 1582.4 678.8C1591.8 674.5 1606.8 668.3 1619.3 662.9C1631.7 657.6 1648.3 650.3 1657.0 646.6C1665.6 642.9 1666.4 642.7 1671.3 640.8C1676.2 638.8 1681.9 636.6 1686.4 634.8C1690.8 633.0 1692.9 632.3 1698.2 630.1C1703.5 628.0 1712.1 624.5 1718.2 621.9C1724.3 619.3 1729.1 616.9 1734.9 614.6C1740.7 612.2 1748.7 609.1 1752.7 607.8C1756.8 606.4 1756.4 606.9 1759.4 606.3C1762.4 605.7 1766.9 604.8 1770.8 604.1C1774.6 603.4 1778.9 602.8 1782.7 602.3C1786.5 601.8 1790.3 601.2 1793.5 601.0C1796.8 600.7 1796.0 600.8 1802.3 600.7C1808.5 600.6 1826.2 600.4 1830.9 600.3M1535.0 716.1C1540.7 713.5 1559.9 704.5 1568.7 700.2C1577.5 696.0 1578.5 694.9 1587.8 690.6C1597.1 686.4 1612.1 680.2 1624.4 674.9C1636.8 669.5 1653.5 662.2 1662.1 658.5C1670.7 654.9 1671.3 654.8 1676.1 652.8C1680.9 650.9 1686.6 648.7 1691.1 646.9C1695.6 645.1 1697.7 644.4 1703.1 642.2C1708.5 640.0 1717.2 636.5 1723.3 633.9C1729.4 631.3 1734.2 628.9 1739.8 626.6C1745.4 624.3 1753.1 621.4 1756.8 620.1C1760.5 618.8 1759.5 619.5 1762.2 619.0C1764.9 618.5 1769.3 617.5 1773.0 616.9C1776.7 616.3 1780.8 615.7 1784.4 615.2C1788.0 614.7 1791.6 614.2 1794.6 613.9C1797.6 613.7 1796.5 613.8 1802.6 613.7C1808.6 613.6 1826.4 613.4 1831.1 613.3M1540.6 727.9C1546.2 725.2 1565.6 716.2 1574.3 711.9C1583.1 707.7 1583.9 706.7 1593.1 702.5C1602.4 698.3 1617.3 692.1 1629.6 686.8C1641.9 681.5 1658.6 674.1 1667.2 670.5C1675.7 666.8 1676.1 666.8 1680.9 664.9C1685.7 663.0 1691.4 660.8 1695.9 659.0C1700.4 657.2 1702.6 656.4 1708.0 654.2C1713.4 652.0 1722.3 648.4 1728.4 645.8C1734.5 643.2 1739.2 640.9 1744.7 638.7C1750.1 636.4 1757.5 633.6 1760.9 632.5C1764.2 631.3 1762.6 632.1 1765.0 631.7C1767.3 631.2 1771.7 630.3 1775.2 629.7C1778.7 629.1 1782.8 628.5 1786.2 628.1C1789.6 627.6 1792.9 627.1 1795.6 626.9C1798.4 626.7 1796.9 626.8 1802.8 626.7C1808.8 626.6 1826.6 626.4 1831.3 626.3" stroke="#777" stroke-width="1.300" fill="none"/>
<path clip-path="url(#cEA)" d="M1501.9 638.9L1549.7 740.2M1515.0 632.7L1562.8 734.0M1528.1 626.5L1575.9 727.8M1541.0 620.1L1591.1 720.3M1554.2 613.7L1598.4 716.5M1567.5 607.9L1611.8 710.8M1580.8 602.2L1625.1 705.1M1594.1 596.5L1638.7 699.2M1607.4 590.7L1652.0 693.4M1620.7 584.9L1665.3 687.6M1634.1 579.2L1676.4 682.9M1647.5 573.8L1688.6 678.0M1661.0 568.5L1702.0 672.7M1674.5 563.1L1717.2 666.7M1687.9 557.6L1730.6 661.1M1701.2 551.9L1746.1 654.4M1714.7 546.3L1754.3 651.1M1728.2 541.2L1767.9 645.9M1742.4 537.4L1769.2 646.1M1756.8 534.5L1778.1 644.4M1771.2 532.2L1788.0 643.0M1785.6 530.5L1798.7 641.7M1800.3 529.7L1804.6 641.6M1814.8 529.5L1816.3 641.5M1829.3 529.3L1830.8 641.3" stroke="#777" stroke-width="1.300" fill="none"/>
<path clip-path="url(#cSO)" d="M1527.1 568.1L1726.8 540.1M1531.3 597.8L1730.9 569.8M1535.4 627.5L1735.1 599.5M1539.6 657.2L1739.3 629.2M1543.8 687.0L1743.5 658.9M1548.0 716.7L1747.6 688.6M1552.1 746.4L1751.8 718.3M1556.3 776.1L1756.0 748.0M1560.5 805.8L1760.2 777.7M1530.4 578.9L1558.5 778.6M1556.2 575.3L1584.2 775.0M1581.9 571.7L1610.0 771.4M1607.7 568.1L1635.7 767.8M1633.4 564.5L1661.5 764.1M1659.2 560.8L1687.2 760.5M1684.9 557.2L1713.0 756.9M1710.7 553.6L1738.7 753.3M1736.4 550.0L1764.5 749.7" stroke="#8c8c8c" stroke-width=".8" fill="none" />
<polygon points="1219.5,583.0 1243.0,589.3 1260.3,588.5 1277.6,581.5 1294.9,574.6 1312.2,571.2 1329.6,572.0 1346.9,576.4 1364.2,580.7 1353.8,612.7 1351.2,621.4 1336.5,616.2 1317.4,613.6 1303.6,611.8 1243.0,611.8 1219.5,611.5" fill="#2b8cf6" stroke="#fff" stroke-width="1.800"/>
<polygon points="1367.6,583.3 1381.5,585.9 1398.8,591.9 1416.1,596.3 1433.4,599.7 1449.9,601.5 1448.1,652.5 1398.8,650.8 1346.9,648.2 1312.2,648.2 1296.7,649.0 1294.9,636.9 1298.4,621.4 1301.9,614.4 1286.3,612.7 1319.2,614.4 1336.5,617.0 1351.2,622.2 1354.8,613.6 1365.2,581.5" fill="#5a3ef8" stroke="#fff" stroke-width="1.800"/>
<polygon points="1098.8,609.7 1093.6,617.4 1110.0,636.5 1109.2,658.1 1143.8,680.6 1141.2,682.4 1143.8,694.5 1157.6,704.9 1162.8,710.0 1185.3,694.5 1211.3,677.2 1232.1,661.6 1240.0,656.0 1294.1,651.0 1294.9,630.0 1300.1,616.2 1284.5,614.0 1243.0,613.3 1219.0,612.5 1160.0,611.0" fill="#e61efd" stroke="#fff" stroke-width="1.400"/>
<polygon points="1233.8,660.7 1243.0,659.0 1294.9,654.6 1339.9,652.0 1398.8,653.8 1449.0,657.2 1446.4,681.5 1390.1,696.2 1378.0,699.6 1355.5,704.8 1333.0,706.5 1303.6,709.1 1277.6,711.7 1260.3,716.9 1243.0,723.9 1225.0,733.0 1210.0,737.5 1197.4,737.7 1181.9,729.1 1171.5,717.0 1195.7,692.7 1211.3,679.8" fill="#ff5f0f" stroke="#fff" stroke-width="1.400"/>
<polygon points="1449.9,601.3 1470.7,600.4 1501.9,597.0 1512.0,600.0 1515.7,604.8 1521.8,613.4 1527.8,622.9 1531.0,628.0 1544.9,654.0 1551.8,673.0 1553.5,676.6 1536.5,676.2 1494.9,674.0 1477.6,673.0 1475.9,676.6 1446.5,681.8 1448.2,659.0" fill="#fe0000" stroke="#fff" stroke-width="1.600"/>
<polygon points="1533.0,626.4 1553.8,616.0 1591.9,599.6 1629.9,583.1 1646.5,573.0 1672.4,565.3 1693.2,556.6 1712.2,548.9 1733.0,541.1 1760.6,535.0 1786.6,532.4 1799.0,531.6 1801.3,534.0 1800.3,543.4 1797.0,546.0 1774.5,549.7 1746.8,555.8 1719.1,565.3 1700.1,573.1 1696.6,581.7 1682.8,583.5 1684.5,591.5 1672.3,597.9 1656.7,604.5 1643.0,609.0 1628.0,617.5 1638.6,636.8 1650.7,651.0 1546.9,654.0" fill="#fe0000" stroke="#fff" stroke-width="1.600"/>
<polygon points="1548.6,658.4 1663.0,650.6 1733.3,638.2 1718.6,650.8 1680.8,652.9 1655.9,658.4 1636.9,661.9 1616.1,664.5 1598.8,665.3 1574.6,668.8 1555.5,676.6" fill="#fe0000" stroke="#fff" stroke-width="1.600"/>
<path clip-path="url(#cB)" d="M1234.0 565.0L1228.0 625.0M1245.5 565.0L1239.5 625.0M1257.5 565.0L1251.5 625.0M1270.0 565.0L1264.0 625.0M1286.0 565.0L1280.0 625.0M1304.0 565.0L1298.0 625.0M1317.0 565.0L1311.0 625.0M1330.5 565.0L1324.5 625.0M1341.0 565.0L1335.0 625.0M1351.0 565.0L1345.0 625.0M1215.0 597.5L1300.0 597.5M1215.0 604.5L1300.0 604.5M1295.0 586.0L1360.0 604.0M1290.0 595.0L1356.0 613.0M1300.0 578.0L1362.0 594.0" stroke="#fff" stroke-width="1.4" fill="none" />
<path clip-path="url(#cP)" d="M1389.0 580.0L1378.0 655.0M1406.0 580.0L1395.0 655.0M1423.0 580.0L1412.0 655.0M1439.0 580.0L1428.0 655.0M1316.0 610.0L1310.0 655.0M1333.0 610.0L1327.0 655.0M1348.0 610.0L1342.0 655.0M1355.0 607.0L1450.0 618.0M1296.0 641.0L1345.0 637.0M1345.0 637.0L1450.0 641.0M1300.0 627.0L1345.0 624.0M1345.0 626.0L1450.0 630.0M1362.0 596.0L1450.0 609.0" stroke="#fff" stroke-width="1.5" fill="none" />
<path clip-path="url(#cP)" d="M1300 617C1330 620 1345 624 1352 627L1450 628.500" stroke="#fff" stroke-width="2.200" fill="none"/>
<path clip-path="url(#cM)" d="M1111.0 606.0L1111.0 656.0M1132.0 606.0L1132.0 656.0M1146.0 606.0L1146.0 656.0M1160.0 606.0L1160.0 656.0M1174.0 606.0L1174.0 656.0M1188.0 606.0L1188.0 656.0M1200.0 606.0L1200.0 656.0M1214.0 606.0L1214.0 656.0M1239.0 606.0L1239.0 656.0M1253.0 606.0L1253.0 656.0M1268.0 606.0L1268.0 656.0M1279.0 606.0L1279.0 656.0M1140.0 621.0L1300.0 621.0M1140.0 634.5L1300.0 634.5M1140.0 646.0L1300.0 646.0M1093.0 612.0L1146.0 660.0M1146.0 660.0L1118.0 690.0M1146.0 621.0L1116.0 634.0M1232.0 651.0L1276.0 616.0M1253.4 616.0L1262.0 630.0M1265.5 614.4L1280.2 633.5M1280.2 633.5L1280.2 651.0M1146.0 661.0L1146.0 683.0M1165.0 661.0L1163.0 700.0M1186.0 661.0L1186.0 694.0M1212.0 661.0L1211.0 678.0M1143.0 682.0L1168.0 684.0M1168.0 684.0L1180.0 700.0M1150.0 705.0L1170.0 690.0" stroke="#fff" stroke-width="1.400" fill="none" />
<path d="M1033.0 640.0C1039.2 640.8 1057.3 643.2 1070.0 645.0C1082.7 646.8 1094.0 648.8 1109.0 650.5C1124.0 652.2 1139.5 653.8 1160.0 655.0C1180.5 656.2 1209.3 658.0 1232.0 657.5C1254.7 657.0 1278.0 653.5 1296.0 652.3C1314.0 651.0 1322.7 650.1 1340.0 650.0C1357.3 649.9 1381.8 650.9 1400.0 651.7C1418.2 652.5 1432.3 654.0 1449.0 655.0C1465.7 656.0 1483.7 657.3 1500.0 657.5C1516.3 657.7 1530.3 656.9 1547.0 656.2C1563.7 655.5 1580.7 654.8 1600.0 653.5C1619.3 652.2 1646.3 650.4 1663.0 648.7C1679.7 647.0 1686.3 645.6 1700.0 643.5C1713.7 641.4 1730.0 638.5 1745.0 636.0C1760.0 633.5 1782.5 629.8 1790.0 628.5" stroke="#fff" stroke-width="5.2" fill="none"/>
<path d="M1033.0 640.0C1039.2 640.8 1057.3 643.2 1070.0 645.0C1082.7 646.8 1094.0 648.8 1109.0 650.5C1124.0 652.2 1139.5 653.8 1160.0 655.0C1180.5 656.2 1209.3 658.0 1232.0 657.5C1254.7 657.0 1278.0 653.5 1296.0 652.3C1314.0 651.0 1322.7 650.1 1340.0 650.0C1357.3 649.9 1381.8 650.9 1400.0 651.7C1418.2 652.5 1432.3 654.0 1449.0 655.0C1465.7 656.0 1483.7 657.3 1500.0 657.5C1516.3 657.7 1530.3 656.9 1547.0 656.2C1563.7 655.5 1580.7 654.8 1600.0 653.5C1619.3 652.2 1646.3 650.4 1663.0 648.7C1679.7 647.0 1686.3 645.6 1700.0 643.5C1713.7 641.4 1730.0 638.5 1745.0 636.0C1760.0 633.5 1782.5 629.8 1790.0 628.5" stroke="#a2a2a2" stroke-width="3.8" fill="none"/>
<path d="M1033.0 640.0C1039.2 640.8 1057.3 643.2 1070.0 645.0C1082.7 646.8 1094.0 648.8 1109.0 650.5C1124.0 652.2 1139.5 653.8 1160.0 655.0C1180.5 656.2 1209.3 658.0 1232.0 657.5C1254.7 657.0 1278.0 653.5 1296.0 652.3C1314.0 651.0 1322.7 650.1 1340.0 650.0C1357.3 649.9 1381.8 650.9 1400.0 651.7C1418.2 652.5 1432.3 654.0 1449.0 655.0C1465.7 656.0 1483.7 657.3 1500.0 657.5C1516.3 657.7 1530.3 656.9 1547.0 656.2C1563.7 655.5 1580.7 654.8 1600.0 653.5C1619.3 652.2 1646.3 650.4 1663.0 648.7C1679.7 647.0 1686.3 645.6 1700.0 643.5C1713.7 641.4 1730.0 638.5 1745.0 636.0C1760.0 633.5 1782.5 629.8 1790.0 628.5" stroke="#f4f4f4" stroke-width="2.6" fill="none"/>
<path d="M1033.0 640.0C1039.2 640.8 1057.3 643.2 1070.0 645.0C1082.7 646.8 1094.0 648.8 1109.0 650.5C1124.0 652.2 1139.5 653.8 1160.0 655.0C1180.5 656.2 1209.3 658.0 1232.0 657.5C1254.7 657.0 1278.0 653.5 1296.0 652.3C1314.0 651.0 1322.7 650.1 1340.0 650.0C1357.3 649.9 1381.8 650.9 1400.0 651.7C1418.2 652.5 1432.3 654.0 1449.0 655.0C1465.7 656.0 1483.7 657.3 1500.0 657.5C1516.3 657.7 1530.3 656.9 1547.0 656.2C1563.7 655.5 1580.7 654.8 1600.0 653.5C1619.3 652.2 1646.3 650.4 1663.0 648.7C1679.7 647.0 1686.3 645.6 1700.0 643.5C1713.7 641.4 1730.0 638.5 1745.0 636.0C1760.0 633.5 1782.5 629.8 1790.0 628.5" stroke="#b5b5b5" stroke-width=".700" fill="none"/>
<path d="M1164 716L1190 694L1212 677L1236 658.500" stroke="#fff" stroke-width="4.6" fill="none"/>
<path d="M1164 716L1190 694L1212 677L1236 658.500" stroke="#a2a2a2" stroke-width="3.2" fill="none"/>
<path d="M1164 716L1190 694L1212 677L1236 658.500" stroke="#f4f4f4" stroke-width="2.0" fill="none"/>
<path d="M1164 716L1190 694L1212 677L1236 658.500" stroke="#b5b5b5" stroke-width=".700" fill="none"/>
<clipPath id="cOW"><polygon points="1171,717 1196,693 1211,680 1226,685 1243,693 1262,697 1284,696 1290,709 1260,717 1243,724 1225,733 1210,737.500 1197,737.700 1182,729"/></clipPath>
<g clip-path="url(#cOW)">
<path clip-path="url(#cO)" d="M1147.1 696.3L1248.6 622.5M1151.5 702.3L1253.0 628.6M1155.9 708.4L1257.4 634.7M1160.3 714.5L1261.8 640.7M1164.7 720.5L1266.2 646.8M1169.1 726.6L1270.6 652.9M1173.5 732.7L1275.0 658.9M1177.9 738.7L1279.4 665.0M1182.3 744.8L1283.8 671.1M1186.8 750.9L1288.2 677.1M1191.2 756.9L1292.7 683.2M1195.6 763.0L1297.1 689.3M1200.0 769.1L1301.5 695.3M1204.4 775.1L1305.9 701.4M1208.8 781.2L1310.3 707.5M1213.2 787.3L1314.7 713.5M1217.6 793.3L1319.1 719.6M1222.0 799.4L1323.5 725.7M1226.4 805.5L1327.9 731.7M1148.9 700.9L1222.6 802.4M1155.3 696.2L1229.1 797.7M1161.8 691.5L1235.5 793.0M1168.3 686.8L1242.0 788.3M1174.7 682.1L1248.5 783.6M1181.2 677.4L1255.0 778.9M1187.7 672.7L1261.4 774.2M1194.2 668.0L1267.9 769.4M1200.6 663.3L1274.4 764.7M1207.1 658.6L1280.8 760.0M1213.6 653.8L1287.3 755.3M1220.0 649.1L1293.8 750.6M1226.5 644.4L1300.3 745.9M1233.0 639.7L1306.7 741.2M1239.5 635.0L1313.2 736.5M1245.9 630.3L1319.7 731.8M1252.4 625.6L1326.1 727.1" stroke="#a8623a" stroke-width=".700" fill="none" />
</g>
<path clip-path="url(#cO)" d="M1251.9 660.0L1251.9 684.0M1262.2 659.0L1262.2 684.0M1274.7 658.0L1274.7 683.0M1243.0 666.0L1279.0 665.0M1245.0 674.0L1281.0 673.0M1322.0 656.0L1323.0 690.0M1334.0 655.0L1335.0 672.0M1346.0 655.0L1347.0 670.0M1350.0 672.0L1364.0 671.0M1300.0 664.0L1312.0 664.0M1300.0 672.0L1312.0 672.0M1345.0 690.0L1380.0 684.0M1330.0 700.0L1332.0 690.0M1345.0 697.0L1346.0 688.0M1360.0 694.0L1360.0 686.0M1296.0 700.0L1297.0 708.0M1278.0 704.0L1280.0 712.0" stroke="#9a6a4a" stroke-width=".800" fill="none" />
<path clip-path="url(#cO)" d="M1231.4 664.8L1245.1 685.3M1245.1 685.3L1297.4 680.7M1279.8 655.0L1284.9 692.1M1294.0 655.0L1298.6 685.3M1310.5 653.0L1314.5 697.8M1315.6 689.8L1332.0 688.5M1350.3 664.1L1395.3 665.9M1395.3 653.0L1395.3 672.0M1364.0 671.5L1395.3 672.0M1366.8 652.5L1366.8 665.0M1372.0 652.5L1372.0 665.0M1410.0 654.0L1410.0 667.0M1426.5 655.0L1426.5 668.0M1397.0 667.5L1445.0 668.5M1312.0 676.0L1332.0 675.0" stroke="#fff" stroke-width="1.300" fill="none" />
<path clip-path="url(#cO)" d="M1211 677.900C1218 681 1222 682 1226.900 683C1234 686 1238 689 1242.800 691C1250 694 1255 695.500 1261 695.500C1270 696 1276 696 1283.800 695C1289 693 1292 691.500 1295 689.800C1300 687 1303 685.500 1306.500 684C1312 682 1316 681.500 1321 680.700C1327 678 1330 675 1334 671.500C1340 668 1350 669 1358 672C1366 675 1370 677 1374 682C1378 688 1380 692 1388 697" stroke="#9a9a9a" stroke-width="3.400" fill="none"/>
<path clip-path="url(#cO)" d="M1211 677.900C1218 681 1222 682 1226.900 683C1234 686 1238 689 1242.800 691C1250 694 1255 695.500 1261 695.500C1270 696 1276 696 1283.800 695C1289 693 1292 691.500 1295 689.800C1300 687 1303 685.500 1306.500 684C1312 682 1316 681.500 1321 680.700C1327 678 1330 675 1334 671.500C1340 668 1350 669 1358 672C1366 675 1370 677 1374 682C1378 688 1380 692 1388 697" stroke="#f2f2f2" stroke-width="2" fill="none"/>
<path clip-path="url(#cO)" d="M1340 652C1346 662 1358 668 1371 677C1376 682 1376 689 1386.700 697.900" stroke="#fff" stroke-width="1.700" fill="none"/>
<path d="M1301 614C1296 625 1294 640 1296 655L1299 672L1296 676H1303L1300 672L1298.500 655C1297 640 1299 626 1304 615Z" fill="#2b8cf6"/>
<path clip-path="url(#cRw)" d="M1472.0 598.0L1470.0 676.0M1483.0 598.0L1483.0 625.0M1449.0 612.0L1472.0 613.0M1472.0 609.0L1483.0 609.0M1449.0 629.5L1527.0 629.5M1449.0 641.0L1470.0 641.5M1514.0 626.0L1513.0 656.0M1514.0 645.0L1548.0 646.0M1466.0 660.0L1465.0 678.0M1494.0 660.0L1493.0 676.0M1517.0 660.0L1516.0 676.0M1535.0 660.0L1534.0 677.0" stroke="#fff" stroke-width="1.200" fill="none" />
<path clip-path="url(#cRw)" d="M1470 621C1490 621 1505 618 1518 612M1470 628C1490 628 1505 626 1520 620" stroke="#d88" stroke-width=".700" fill="none"/>
<path clip-path="url(#cRw)" d="M1518 606C1520 616 1516 622 1519 628" stroke="#fff" stroke-width="1.600" fill="none"/>
<path clip-path="url(#cRm)" d="M1537.4 636.5L1641.6 591.2M1542.2 647.5L1641.9 604.1M1546.8 658.0L1642.3 616.5M1553.8 616.0L1579.8 674.0M1567.0 610.5L1593.0 668.5M1591.9 599.6L1617.9 657.6M1606.0 593.5L1632.0 651.5M1629.9 583.1L1655.9 641.1M1646.5 573.5L1672.5 631.5" stroke="#fff" stroke-width="1.200" fill="none" />
<path clip-path="url(#cRm)" d="M1660.0 569.0L1669.0 601.0M1672.4 565.3L1681.4 597.3M1684.0 560.5L1693.0 592.5M1693.2 556.6L1702.2 588.6M1702.0 553.0L1711.0 585.0M1712.2 548.9L1721.2 580.9M1722.0 545.5L1731.0 577.5M1733.0 541.1L1742.0 573.1M1746.0 538.0L1755.0 570.0M1760.6 535.0L1769.6 567.0M1773.0 533.5L1782.0 565.5M1786.6 532.4L1795.6 564.4" stroke="#8a5050" stroke-width=".900" fill="none" />
<path clip-path="url(#cRm)" d="M1640.0 590.0C1643.4 588.8 1652.9 585.8 1660.3 583.0C1667.7 580.2 1677.9 575.8 1684.5 573.0C1691.1 570.2 1694.2 569.0 1700.0 566.5C1705.8 564.0 1711.2 561.2 1719.0 558.0C1726.8 554.8 1737.5 550.2 1746.8 547.5C1756.0 544.8 1765.5 543.0 1774.5 541.5C1783.5 540.0 1796.6 539.0 1801.0 538.5" stroke="#8a5050" stroke-width=".900" fill="none"/>
<path clip-path="url(#cRl)" d="M1574.0 655.0L1576.0 672.0M1598.0 655.0L1600.0 668.0M1612.0 655.0L1614.0 668.0M1636.0 652.0L1638.0 664.0M1655.0 651.0L1657.0 660.0M1680.0 647.0L1683.0 656.0M1704.0 643.0L1708.0 654.0" stroke="#fff" stroke-width="1.300" fill="none" />
<path d="M1652.0 585.0C1650.0 585.2 1643.7 585.2 1640.0 586.0C1636.3 586.8 1632.7 588.0 1630.0 590.0C1627.3 592.0 1625.0 595.3 1624.0 598.0C1623.0 600.7 1623.0 602.8 1624.0 606.0C1625.0 609.2 1627.3 612.5 1630.0 617.0C1632.7 621.5 1636.3 627.7 1640.0 633.0C1643.7 638.3 1647.3 643.2 1652.0 649.0C1656.7 654.8 1662.7 661.8 1668.0 668.0C1673.3 674.2 1679.7 681.2 1684.0 686.0C1688.3 690.8 1692.3 695.2 1694.0 697.0" stroke="#c9c9c9" stroke-width="3.600" fill="none"/>
<path d="M1650.2 585.8C1648.2 586.0 1641.9 586.0 1638.2 586.8C1634.5 587.6 1630.9 588.8 1628.2 590.8C1625.5 592.8 1623.2 596.1 1622.2 598.8C1621.2 601.5 1621.2 603.6 1622.2 606.8C1623.2 610.0 1625.5 613.3 1628.2 617.8C1630.9 622.3 1634.5 628.5 1638.2 633.8C1641.9 639.1 1645.5 644.0 1650.2 649.8C1654.9 655.6 1660.9 662.6 1666.2 668.8C1671.5 675.0 1677.9 682.0 1682.2 686.8C1686.5 691.6 1690.5 696.0 1692.2 697.8" stroke="#8d8d8d" stroke-width=".600" fill="none"/>
<path d="M1640.0 578.0C1642.5 578.3 1649.7 578.9 1655.0 580.0C1660.3 581.1 1666.2 582.8 1672.0 584.5C1677.8 586.2 1683.8 588.1 1690.0 590.0C1696.2 591.9 1702.5 594.5 1709.0 595.6C1715.5 596.7 1725.7 596.6 1729.0 596.8" stroke="#c4c4c4" stroke-width="3.200" fill="none"/>
<path d="M1702.0 588.0C1704.2 587.4 1710.5 585.4 1715.0 584.5C1719.5 583.6 1721.5 583.1 1729.0 582.9C1736.5 582.6 1749.2 582.9 1760.0 583.0C1770.8 583.1 1787.9 583.3 1793.5 583.4" stroke="#999" stroke-width="1.600" fill="none"/>
<path d="M1690.0 588.0C1693.9 588.2 1705.4 589.2 1713.4 589.5C1721.4 589.8 1731.6 588.5 1737.9 589.5C1744.2 590.5 1746.2 593.5 1751.2 595.6C1756.2 597.7 1760.5 600.2 1767.9 602.3C1775.3 604.3 1791.1 607.0 1795.7 607.9" stroke="#6d9a9a" stroke-width=".800" fill="none"/>
<path d="M1684 686L1700 706" stroke="#c9c9c9" stroke-width="4" fill="none"/>
<path d="M1566.0 555.5C1568.0 555.4 1574.3 555.4 1578.0 555.0C1581.7 554.6 1585.5 552.5 1588.0 553.0C1590.5 553.5 1591.7 555.8 1593.0 558.0C1594.3 560.2 1594.2 564.0 1596.0 566.0C1597.8 568.0 1602.7 569.3 1604.0 570.0" stroke="#6d9a9a" stroke-width=".800" fill="none"/>
<path d="M1528.0 570.0C1530.8 568.3 1538.7 562.7 1545.0 560.0C1551.3 557.3 1559.8 555.7 1566.0 554.0C1572.2 552.3 1578.0 550.0 1582.0 550.0C1586.0 550.0 1588.0 551.7 1590.0 554.0C1592.0 556.3 1591.7 561.5 1594.0 564.0C1596.3 566.5 1602.3 568.2 1604.0 569.0" stroke="#d0d0d0" stroke-width="2.400" fill="none"/>
<path d="M1080 471C1077 490 1075 510 1073 540C1071.500 560 1069 580 1064 590C1058 602 1050 610 1042 618" stroke="#2a2a2a" stroke-width="2.600" fill="none"/>
<path d="M1083.500 471C1080 492 1078 512 1076.500 542C1075 562 1073 580 1068 592" stroke="#2a2a2a" stroke-width="1" fill="none"/>
<path d="M1074.500 471C1072 490 1070.500 510 1069 540C1067.500 560 1064 580 1056 594C1050 603 1042 610 1035 615" stroke="#2a2a2a" stroke-width="1" fill="none"/>
<path d="M1074.5 518.6C1079.1 517.2 1093.0 513.0 1102.2 510.0C1111.5 507.0 1121.9 502.4 1130.0 500.4C1138.1 498.4 1143.8 497.6 1150.7 497.8C1157.6 498.0 1166.6 499.1 1171.5 501.3C1176.4 503.5 1177.8 506.3 1180.1 510.8C1182.4 515.3 1183.8 521.8 1185.3 528.1C1186.8 534.5 1187.1 542.8 1188.8 548.9C1190.5 555.0 1192.8 560.5 1195.7 564.5C1198.6 568.5 1202.6 570.5 1206.1 573.1C1209.6 575.7 1213.3 578.5 1216.5 580.0C1219.7 581.5 1223.6 581.7 1225.0 582.0" stroke="#333" stroke-width="1.300" fill="none"/>
<path d="M1074.500 555.800L1107.400 565.300M1114.400 565.300L1175 583.500L1199.200 590.400C1206 589 1210 586 1213 583.500" stroke="#333" stroke-width="1.100" fill="none"/>
<rect x="1073" y="574" width="5" height="12" fill="#111"/><path d="M1168 594H1178V603H1170Z" fill="#333"/>
<path d="M1079 588L1098 596V610M1084 676C1096 672 1104 666 1109 658M1158 717L1166 711" stroke="#e61efd" stroke-width="1.400" fill="none"/>
<g fill="none" stroke="#8c8c8c" stroke-width=".800">
<path d="M1033 633L1098 609M1033 638L1072 646M1040 622C1050 612 1058 602 1062 592M1056 606C1064 606 1078 607 1098 609M1062 606C1056 620 1058 634 1064 640M1064 606C1080 608 1088 614 1086 622C1080 634 1068 642 1060 648M1033 634C1060 650 1100 668 1140 700C1150 708 1158 712 1166 716M1037 629C1070 650 1110 672 1150 706M1062 658L1110 690M1076 692L1120 652M1079 695L1123 655M1085 640V668M1090 640V668"/>
<path d="M1166 716C1180 728 1195 738 1215 740M1164 711L1236 658M1168 714L1238 661"/>
<path d="M1200.0 741.0C1204.2 740.2 1215.0 739.5 1225.0 736.0C1235.0 732.5 1247.0 724.0 1260.0 720.0C1273.0 716.0 1287.2 714.0 1303.0 712.0C1318.8 710.0 1338.8 710.5 1355.0 708.0C1371.2 705.5 1384.8 700.9 1400.0 697.0C1415.2 693.1 1433.3 687.3 1446.0 684.5C1458.7 681.7 1463.7 680.8 1476.0 680.0C1488.3 679.2 1506.0 679.2 1520.0 679.5C1534.0 679.8 1545.0 681.2 1560.0 682.0C1575.0 682.8 1595.0 684.2 1610.0 684.0C1625.0 683.8 1636.7 683.3 1650.0 681.0C1663.3 678.7 1678.3 674.5 1690.0 670.0C1701.7 665.5 1711.0 660.0 1720.0 654.0C1729.0 648.0 1736.1 643.0 1743.8 634.0C1751.5 625.0 1758.6 610.5 1766.0 600.0C1773.4 589.5 1782.3 579.7 1788.0 571.0C1793.7 562.3 1796.7 554.0 1800.0 548.0C1803.3 542.0 1805.8 539.7 1808.0 535.0C1810.2 530.3 1813.0 525.0 1813.5 520.0C1814.0 515.0 1812.6 510.0 1811.0 505.0C1809.4 500.0 1806.7 494.5 1804.0 490.0C1801.3 485.5 1797.3 481.2 1795.0 478.0C1792.7 474.8 1790.8 472.2 1790.0 471.0"/>
<path d="M1446.0 687.5C1451.0 686.8 1463.7 683.8 1476.0 683.0C1488.3 682.2 1506.0 682.2 1520.0 682.5C1534.0 682.8 1545.0 684.2 1560.0 685.0C1575.0 685.8 1594.7 687.2 1610.0 687.0C1625.3 686.8 1638.3 686.3 1652.0 684.0C1665.7 681.7 1680.2 677.6 1692.0 673.0C1703.8 668.4 1713.8 662.7 1723.0 656.5C1732.2 650.3 1739.2 645.1 1747.0 636.0C1754.8 626.9 1762.1 612.5 1769.5 602.0C1776.9 591.5 1785.8 581.7 1791.5 573.0C1797.2 564.3 1800.2 556.0 1803.5 550.0C1806.8 544.0 1809.8 539.2 1811.0 537.0"/>
<path d="M1745 634L1800 624M1790 600L1798 612L1794 620L1800 624"/>
<path d="M1516.0 680.0C1516.7 681.7 1517.7 687.7 1520.0 690.0C1522.3 692.3 1526.7 692.3 1530.0 694.0C1533.3 695.7 1535.7 699.0 1540.0 700.0C1544.3 701.0 1551.7 698.7 1556.0 700.0C1560.3 701.3 1562.7 705.3 1566.0 708.0C1569.3 710.7 1574.0 712.7 1576.0 716.0C1578.0 719.3 1578.7 723.8 1578.0 728.0C1577.3 732.2 1573.0 738.8 1572.0 741.0"/>
<path d="M1652 690C1648 694 1650 700 1656 700M1656 700C1670 712 1680 722 1690 730"/>
<path d="M1508.0 597.0C1510.0 594.8 1514.7 589.3 1520.0 584.0C1525.3 578.7 1534.0 571.0 1540.0 565.0C1546.0 559.0 1551.0 552.8 1556.0 548.0C1561.0 543.2 1564.3 539.5 1570.0 536.0C1575.7 532.5 1578.3 529.5 1590.0 527.0C1601.7 524.5 1623.3 522.8 1640.0 521.0C1656.7 519.2 1676.7 518.8 1690.0 516.0C1703.3 513.2 1710.8 507.5 1720.0 504.0C1729.2 500.5 1733.3 497.0 1745.0 495.0C1756.7 493.0 1779.8 492.2 1790.0 492.0C1800.2 491.8 1803.3 493.7 1806.0 494.0"/>
<path d="M1542.500 530.700L1610 606M1544.500 529.500L1612 604M1666 471L1688 512M1669 471L1691 511M1566.800 492.600L1569.400 531.600C1568 538 1562 543 1553.800 547.200M1453.300 553.800L1451.600 605.800M1275.900 550.400L1300 581.500M1385 540L1367.600 581.500M1295 540L1325 573"/>
<path d="M1785 471C1800 490 1812 500 1830 504M1790 488C1800 490 1808 488 1814 484M1806 530H1820"/>
<path d="M1086 476C1090 486 1096 494 1098 510M1150 478V498M1204 502L1210 518L1236 510M1236 510C1240 520 1246 528 1254 532M1210 518L1250 555"/>
</g>
<path d="M1275.900 550.400L1300 581.500M1385 540L1367.600 581.500M1453.300 553.800L1451.600 605.800M1566.800 492.600L1569.400 531.600M1541.700 530.700L1553 543" stroke="#444" stroke-width="1.100" fill="none"/>
<path d="M1449 601H1453V606H1449Z" fill="#ddd" stroke="#777" stroke-width=".500"/>
<path d="M1612 570C1610 556 1620 546 1634 544C1646 543 1656 550 1658 560" stroke="#666" stroke-width="1.200" fill="none"/>
<g clip-path="url(#cNE)" fill="#444"><circle cx="1675.4" cy="510.7" r=".700"/><circle cx="1699.4" cy="513.5" r=".700"/><circle cx="1650.0" cy="527.1" r=".700"/><circle cx="1777.7" cy="549.0" r=".700"/><circle cx="1754.8" cy="517.2" r=".700"/><circle cx="1720.5" cy="520.2" r=".700"/><circle cx="1665.9" cy="510.8" r=".700"/><circle cx="1672.2" cy="556.0" r=".700"/><circle cx="1764.3" cy="549.4" r=".700"/><circle cx="1760.1" cy="515.6" r=".700"/><circle cx="1686.5" cy="539.5" r=".700"/><circle cx="1749.8" cy="552.0" r=".700"/><circle cx="1772.0" cy="509.8" r=".700"/><circle cx="1730.9" cy="541.9" r=".700"/><circle cx="1715.9" cy="514.8" r=".700"/><circle cx="1711.0" cy="509.9" r=".700"/><circle cx="1780.2" cy="552.6" r=".700"/><circle cx="1722.1" cy="521.5" r=".700"/><circle cx="1776.3" cy="536.5" r=".700"/><circle cx="1772.3" cy="551.6" r=".700"/><circle cx="1716.3" cy="527.8" r=".700"/><circle cx="1729.8" cy="528.7" r=".700"/><circle cx="1664.2" cy="521.8" r=".700"/><circle cx="1761.9" cy="507.4" r=".700"/><circle cx="1646.9" cy="539.4" r=".700"/><circle cx="1682.1" cy="534.4" r=".700"/><circle cx="1710.7" cy="523.9" r=".700"/><circle cx="1789.6" cy="515.8" r=".700"/><circle cx="1701.9" cy="516.1" r=".700"/><circle cx="1734.9" cy="520.2" r=".700"/><circle cx="1693.4" cy="546.1" r=".700"/><circle cx="1688.1" cy="535.7" r=".700"/><circle cx="1775.6" cy="510.6" r=".700"/><circle cx="1649.2" cy="517.6" r=".700"/><circle cx="1754.8" cy="538.8" r=".700"/><circle cx="1675.6" cy="523.2" r=".700"/><circle cx="1666.6" cy="530.2" r=".700"/><circle cx="1646.4" cy="543.4" r=".700"/></g>
<text x="1092" y="696" font-size="4.500" fill="#555" transform="rotate(12 1092 696)" font-family="Liberation Serif,Noto Serif CJK SC,serif">白塔堡河路</text>
<circle cx="1769" cy="684.600" r="11.400" fill="none" stroke="#d4d4d4" stroke-width=".700"/>
<path d="M1771 693V701M1770.500 668L1771.800 664L1773 668" stroke="#d0d0d0" stroke-width=".700" fill="none"/>
<circle cx="1769" cy="684.600" r="8.300" fill="none" stroke="#222" stroke-width=".900"/>
<path d="M1773.700 668.500C1772.500 677 1769.500 685 1764.500 692L1759.500 697.800L1762.800 691C1767.500 684 1771 677 1773.700 668.500Z" fill="#111"/>
<text x="1752.400" y="712.900" textLength="35.600" lengthAdjust="spacingAndGlyphs" font-size="9.700" fill="#222" font-family="Liberation Sans,sans-serif">1 : 25000</text>
<path d="M1752 717.800H1788" stroke="#222" stroke-width=".900"/><path d="M1752 717.300H1755.500M1770 717.300H1788" stroke="#222" stroke-width="1.600"/>
<text x="1750.500" y="722.800" font-size="2.900" fill="#444" font-family="Liberation Sans,sans-serif" xml:space="preserve">0 100          500              1000m</text>
</svg><!--MAPEND-->
<div class="abs song" style="left:1042px;top:741px;width:840px;height:30px;background:#d0dfe6;text-align:center;line-height:31px;font-size:12px">网格管理</div>
<!-- row3 -->
<div class="pn" style="left:164px;top:782px;width:567px;height:21px"></div>
<div class="pn" style="left:743px;top:782px;width:568px;height:21px"></div>
<div class="pn" style="left:1323px;top:782px;width:568px;height:21px"></div>
<div class="abs" style="left:170px;top:782px;width:555px;height:21px;background:#fde9d4;overflow:hidden"><div class="t12 song" style="left:22px;top:7px">待分配任务</div><div class="t12 song" style="left:521px;top:7px">全部</div>
<svg class="abs" style="left:0;top:2px" width="17" height="17" viewBox="0 0 17 17"><circle cx="8.300" cy="8.500" r="7" fill="none" stroke="#f7941d" stroke-width="1.500"/><rect x="7.600" y="6.800" width="1.500" height="5.600" fill="#f7941d"/><rect x="7.600" y="4.400" width="1.500" height="1.500" fill="#f7941d"/></svg></div>
<div class="abs" style="left:749px;top:782px;width:556px;height:21px;background:#e2edd0;overflow:hidden"><div class="t12 song" style="left:22px;top:7px">待完成任务</div><div class="t12 song" style="left:522px;top:7px">全部</div>
<svg class="abs" style="left:0;top:2px" width="17" height="17" viewBox="0 0 17 17"><circle cx="8.200" cy="9" r="8" fill="#68a212"/><path d="M-.5 12.600L4.400 5.800L13.900 10.500L9.200 17.800L3 18Z" fill="#e2edd0"/><path d="M3.300 13.400L6.900 7.500" stroke="#68a212" stroke-width="1.500" stroke-dasharray="1.600 .8"/></svg></div>
<div class="abs song" style="left:1329px;top:782px;width:556px;height:21px;background:#d0dfe6;overflow:hidden;text-align:center;font-size:12px;line-height:16px;padding-top:7px">卫情月报</div>


<div id="foot"></div>
</body>
</html>
